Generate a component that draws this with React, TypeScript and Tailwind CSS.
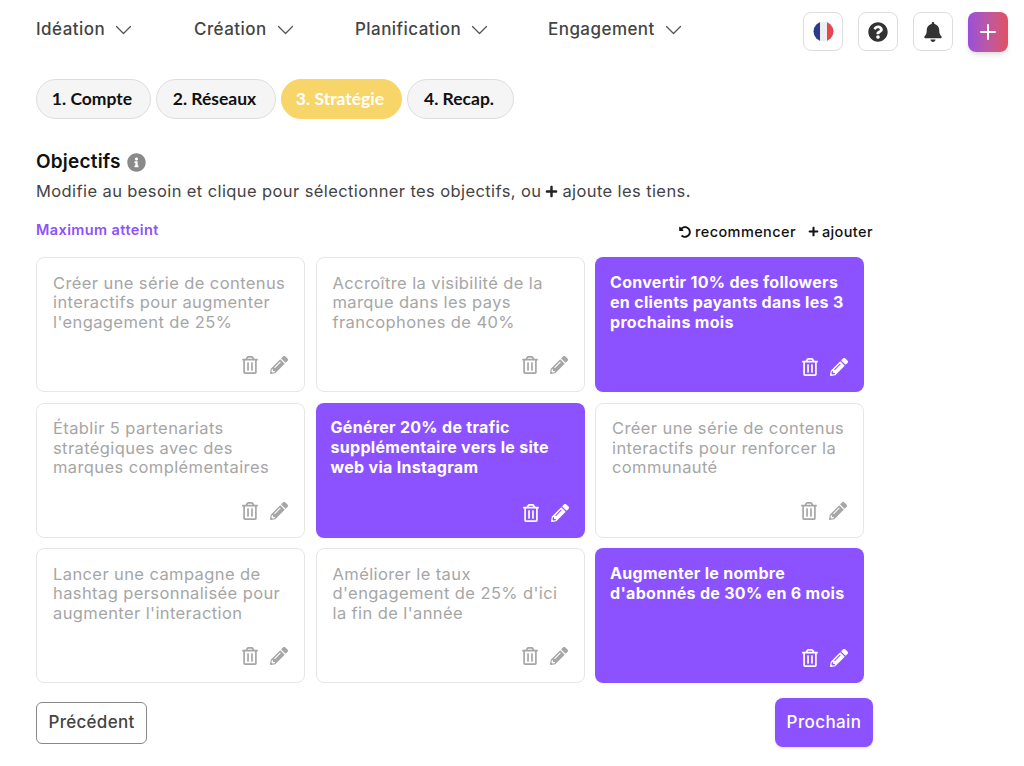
import { FaBell, FaInfoCircle, FaPencilAlt, FaPlus, FaQuestionCircle, FaRegTrashAlt, FaUndoAlt } from "react-icons/fa";

const F = "[font-family:Inter,'Liberation_Sans',sans-serif]";

function Chevron() {
  return (
    <svg width="17" height="10" viewBox="0 0 17 10" fill="none" stroke="#555" strokeWidth="1.3" strokeLinecap="round" strokeLinejoin="round">
      <path d="M1.5 1.5 8.5 8.5 15.5 1.5" />
    </svg>
  );
}

function Flag() {
  return (
    <svg width="21" height="21" viewBox="0 0 21 21">
      <defs>
        <clipPath id="flagclip">
          <circle cx="10.5" cy="10.5" r="10" />
        </clipPath>
      </defs>
      <g clipPath="url(#flagclip)">
        <rect width="7" height="21" fill="#2d3a8c" />
        <rect x="7" width="7" height="21" fill="#eeeeee" />
        <rect x="14" width="7" height="21" fill="#e5474f" />
      </g>
    </svg>
  );
}

const nav = [
  { t: "Idéation", c: "w-[158px]" },
  { t: "Création", c: "w-[161px]" },
  { t: "Planification", c: "w-[193px]" },
  { t: "Engagement", c: "w-auto" },
];

const steps = [
  { t: "1. Compte", c: "w-[115px] bg-[#f5f5f5] border-[#dddddd] text-[#111111]" },
  { t: "2. Réseaux", c: "w-[120px] bg-[#f5f5f5] border-[#dddddd] text-[#111111]" },
  { t: "3. Stratégie", c: "w-[121px] bg-[#f8d568] border-[#f8d568] text-white" },
  { t: "4. Recap.", c: "w-[107px] bg-[#f5f5f5] border-[#dddddd] text-[#111111]" },
];

const cards = [
  { t: "Créer une série de contenus interactifs pour augmenter l'engagement de 25%", s: false },
  { t: "Accroître la visibilité de la marque dans les pays francophones de 40%", s: false },
  { t: "Convertir 10% des followers en clients payants dans les 3 prochains mois", s: true },
  { t: "Établir 5 partenariats stratégiques avec des marques complémentaires", s: false },
  { t: "Générer 20% de trafic supplémentaire vers le site web via Instagram", s: true },
  { t: "Créer une série de contenus interactifs pour renforcer la communauté", s: false },
  { t: "Lancer une campagne de hashtag personnalisée pour augmenter l'interaction", s: false },
  { t: "Améliorer le taux d'engagement de 25% d'ici la fin de l'année", s: false },
  { t: "Augmenter le nombre d'abonnés de 30% en 6 mois", s: true },
];

function Card({ t, s }: { t: string; s: boolean }) {
  return (
    <div
      className={
        s
          ? "h-[135px] rounded-lg bg-[#8c52ff] px-[15px] pt-[14.5px] pb-[16px] flex flex-col justify-between text-white"
          : "h-[135px] rounded-lg bg-white border border-[#e6e6e6] px-[16px] pt-[15.5px] pb-[17px] flex flex-col justify-between text-[#a6a6a6]"
      }
    >
      <p className={s ? "text-[16px] leading-[20px] font-bold tracking-[0.3px]" : "text-[16.5px] leading-[19.7px] tracking-[0.4px]"}>{t}</p>
      <div className={s ? "flex justify-end items-center gap-[11px] pr-[1px] text-white" : "flex justify-end items-center gap-[11px] text-[#a6a6a6]"}>
        <FaRegTrashAlt size={18} />
        <FaPencilAlt size={18} />
      </div>
    </div>
  );
}

export default function App() {
  return (
    <div className={`w-[1024px] h-[766px] bg-white overflow-hidden pl-[36px] ${F}`}>
      <header className="h-[52px] pt-[12px] flex items-start text-[#444444]">
        <nav className="flex items-center h-[36px] w-[767px]">
          {nav.map((n) => (
            <div key={n.t} className={`flex items-center gap-[10px] text-[17px] font-medium tracking-[0.45px] ${n.c}`}>
              <span>{n.t}</span>
              <Chevron />
            </div>
          ))}
        </nav>
        <div className="flex gap-[15px]">
          <div className="w-[40px] h-[39px] rounded-lg border-[1.5px] border-[#dddddd] flex items-center justify-center"><Flag /></div>
          <div className="w-[40px] h-[39px] rounded-lg border-[1.5px] border-[#dddddd] flex items-center justify-center"><FaQuestionCircle size={20} color="#333" /></div>
          <div className="w-[40px] h-[39px] rounded-lg border-[1.5px] border-[#dddddd] flex items-center justify-center"><FaBell size={20} color="#333" /></div>
          <div className="w-[40px] h-[40px] rounded-lg bg-gradient-to-r from-[#9b4ddb] to-[#e2505f] shadow-md flex items-center justify-center">
            <svg width="16" height="16" viewBox="0 0 16 16" stroke="#fff" strokeWidth="2" strokeLinecap="round"><path d="M8 1v14M1 8h14" /></svg>
          </div>
        </div>
      </header>

      <div className="mt-[27px] flex gap-[5px] items-center [font-family:Lato,sans-serif]">
        {steps.map((s) => (
          <div key={s.t} className={`h-[40px] rounded-full border-[1.5px] flex items-center justify-center pr-[3px] text-[17.5px] font-bold ${s.c}`}>{s.t}</div>
        ))}
      </div>

      <div className="mt-[31px] flex items-center gap-[6px] h-[24px]">
        <h2 className="text-[19px] font-semibold tracking-[0.2px] text-[#111111]">Objectifs</h2>
        <FaInfoCircle size={19} color="#8a8a8a" />
      </div>
      <p className="mt-[5px] h-[24px] flex items-center gap-[4px] text-[16.5px] tracking-[0.4px] text-[#444444]">
        <span>Modifie au besoin et clique pour sélectionner tes objectifs, ou</span>
        <FaPlus size={13} color="#222" />
        <span>ajoute les tiens.</span>
      </p>

      <div className="w-[837px] mt-[14px] h-[32px] flex justify-between items-center">
        <span className="text-[14.5px] font-semibold tracking-[0.4px] text-[#8c52ff] -mt-[7px]">Maximum atteint</span>
        <div className="flex items-center gap-[12px] text-[14.5px] tracking-[0.4px] font-medium text-[#111111] -mt-[3px]">
          <span className="flex items-center gap-[4px]"><FaUndoAlt size={12} />recommencer</span>
          <span className="flex items-center gap-[3px]"><FaPlus size={11} />ajouter</span>
        </div>
      </div>

      <div className="w-[828px] mt-[8px] grid grid-cols-3 gap-x-[10.5px] gap-y-[10.5px]">
        {cards.map((c) => (
          <Card key={c.t} t={c.t} s={c.s} />
        ))}
      </div>

      <div className="w-[837px] mt-[15px] flex justify-between items-start">
        <div className="mt-[4px] w-[111px] h-[42px] rounded-md border border-[#888888] flex items-center justify-center text-[17px] tracking-[0.3px] font-medium text-[#444444]">Précédent</div>
        <div className="w-[98px] h-[49px] rounded-lg bg-[#8c52ff] shadow-sm flex items-center justify-center text-[17px] font-medium text-white tracking-[0.4px]">Prochain</div>
      </div>
    </div>
  );
}
